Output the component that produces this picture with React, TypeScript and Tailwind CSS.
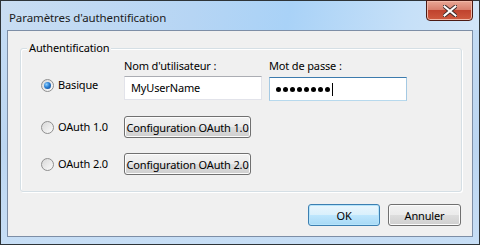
import React from 'react';

const font = { fontFamily: '"Segoe UI", "Noto Sans", "Open Sans", sans-serif' };

const Radio: React.FC<{ checked?: boolean; label: string }> = ({ checked, label }) => (
    <div className="flex items-center gap-[4px]">
        <span className="w-[13px] h-[13px] rounded-full border border-[#8f8f8f] bg-gradient-to-br from-[#d8d8d8] to-[#fbfbfb] flex items-center justify-center">
            {checked && (
                <span className="w-[7px] h-[7px] rounded-full bg-[radial-gradient(circle_at_35%_35%,#8fd1ff_0%,#2b7fd3_45%,#0d3f84_100%)]" />
            )}
        </span>
        <span className="text-[11px] tracking-[-0.15px] text-black">{label}</span>
    </div>
);

const WinButton: React.FC<{ children: React.ReactNode; isDefault?: boolean; className?: string }> = ({ children, isDefault, className = '' }) => (
    <button
        className={`h-[22px] rounded-[3px] border text-[11px] tracking-[-0.15px] whitespace-nowrap text-black leading-none ${
            isDefault
                ? 'border-[#3c7fb1] bg-[linear-gradient(to_bottom,#eaf6fd_0%,#d9f0fc_50%,#bee6fd_51%,#a7d9f5_100%)] shadow-[inset_0_0_0_1px_#b5e4fb]'
                : 'border-[#707070] bg-[linear-gradient(to_bottom,#f2f2f2_0%,#ebebeb_50%,#dddddd_51%,#cfcfcf_100%)] shadow-[inset_0_0_0_1px_#fcfcfc]'
        } ${className}`}
    >
        {children}
    </button>
);

const App: React.FC = () => {
    return (
        <div style={font} className="w-[480px] h-[245px] border border-[#2e3438] bg-[linear-gradient(to_bottom,#c5dcf4,#bcd6f1_60%,#c7def5)] flex flex-col">
            {/* title bar */}
            <div className="h-[29px] flex items-start justify-between bg-[linear-gradient(100deg,#c9ddf2_0%,#b6d5f4_40%,#a9d2f7_60%,#c6e0f8_85%,#d2e5f8_100%)]">
                <span className="pl-[8px] pt-[8px] text-[11.5px] tracking-[-0.1px] text-[#1b1b1b]">Paramètres d'authentification</span>
                <div className="mr-[6px] -mt-px w-[47px] h-[21px] rounded-b-[4px] border border-[#4b1a14] bg-[linear-gradient(to_bottom,#e8a796_0%,#d8806e_45%,#c0432e_50%,#cf5a3f_100%)] shadow-[inset_0_0_0_1px_#f0b8a8] flex items-center justify-center">
                    <svg width="14" height="12" viewBox="0 0 14 12">
                        <path d="M1.5 1.5 L12.5 10.5 M12.5 1.5 L1.5 10.5" stroke="#3b2a2a" strokeWidth="4" strokeLinecap="square" />
                        <path d="M1.5 1.5 L12.5 10.5 M12.5 1.5 L1.5 10.5" stroke="#ffffff" strokeWidth="2" strokeLinecap="square" />
                    </svg>
                </div>
            </div>

            {/* client area */}
            <div className="mx-[6px] mb-[7px] flex-1 border border-[#7d8ea6] bg-[#f0f0f0] flex flex-col">
                <div className="relative mt-[17px] ml-[12px] mr-[10px] h-[144px] rounded-[3px] border border-[#d5dfe5] shadow-[inset_1px_1px_0_#ffffff,1px_1px_0_#ffffff]">
                    <span className="absolute -top-[9px] left-[6px] px-[2px] bg-[#f0f0f0] text-[11px] tracking-[-0.15px] text-black">Authentification</span>

                    <div className="pl-[20px] pt-[9px] flex flex-col">
                        <div className="flex h-[16px] items-center text-[11px] tracking-[-0.15px] text-black">
                            <div className="w-[83px]" />
                            <div className="w-[145px]">Nom d'utilisateur :</div>
                            <div>Mot de passe :</div>
                        </div>

                        <div className="flex mt-[2px]">
                            <div className="w-[83px] pt-[1px]">
                                <Radio checked label="Basique" />
                            </div>
                            <div className="w-[145px]">
                                <div className="w-[138px] h-[24px] bg-white border border-[#e2e3ea] border-t-[#abadb3] flex items-center pl-[6px] text-[11px] tracking-[-0.15px] text-black">
                                    MyUserName
                                </div>
                            </div>
                            <div className="w-[138px] h-[24px] mt-[1px] bg-white border border-[#a4c9e3] border-t-[#3d7bad] border-b-[#b7d9ed] flex items-center pl-[6px]">
                                <div className="flex gap-[2px]">
                                    {Array.from({ length: 8 }).map((_, i) => (
                                        <span key={i} className="w-[5px] h-[5px] rounded-full bg-black" />
                                    ))}
                                </div>
                                <span className="ml-[2px] w-px h-[13px] bg-black" />
                            </div>
                        </div>

                        <div className="flex items-center mt-[15px]">
                            <div className="w-[83px]">
                                <Radio label="OAuth 1.0" />
                            </div>
                            <WinButton className="w-[127px]">Configuration OAuth 1.0</WinButton>
                        </div>

                        <div className="flex items-center mt-[15px]">
                            <div className="w-[83px]">
                                <Radio label="OAuth 2.0" />
                            </div>
                            <WinButton className="w-[127px]">Configuration OAuth 2.0</WinButton>
                        </div>
                    </div>
                </div>

                <div className="mt-[12px] mr-[11px] flex justify-end gap-[8px]">
                    <WinButton isDefault className="w-[72px]">OK</WinButton>
                    <WinButton className="w-[73px]">Annuler</WinButton>
                </div>
            </div>
        </div>
    );
};

export default App;
